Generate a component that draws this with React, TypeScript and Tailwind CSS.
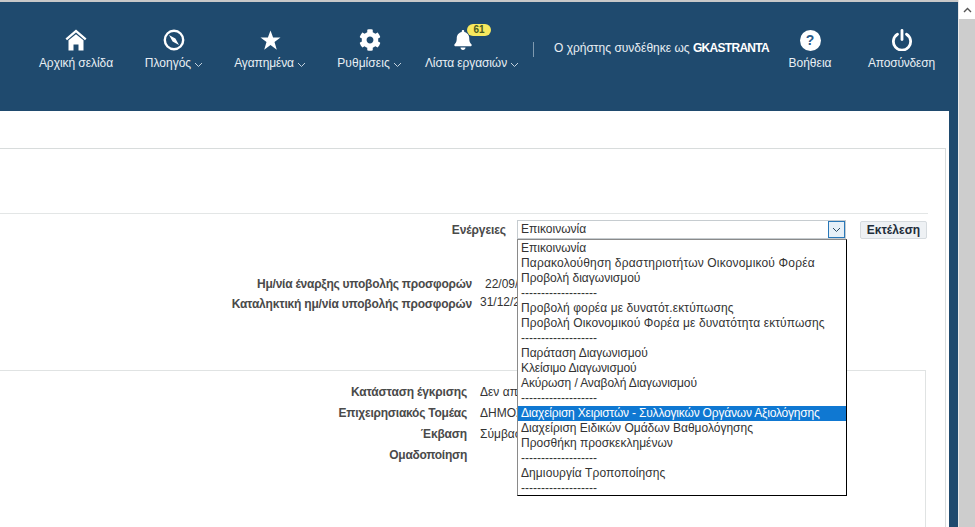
import React from "react";
import { FaBell, FaCog } from "react-icons/fa";

const navItems = [
  { label: "Αρχική σελίδα", icon: "home", ml: "ml-[39px]", w: "w-[74px]", tw: "tracking-[-0.05px]" },
  { label: "Πλοηγός", icon: "compass", ml: "ml-[32px]", w: "w-[58px]", tw: "", caret: true },
  { label: "Αγαπημένα", icon: "star", ml: "ml-[32px]", w: "w-[70px]", tw: "tracking-[-0.15px]", caret: true },
  { label: "Ρυθμίσεις", icon: "cog", ml: "ml-[32px]", w: "w-[65px]", tw: "tracking-[0.05px]", caret: true },
  { label: "Λίστα εργασιών", icon: "bell", ml: "ml-[24px]", w: "w-[92px]", tw: "tracking-[-0.1px]", caret: true },
];

// tracking per row: the source font was hinted, so line widths differ a little
const options = [
  { text: "Επικοινωνία", tw: "" },
  { text: "Παρακολούθηση δραστηριοτήτων Οικονομικού Φορέα", tw: "tracking-[0.17px]" },
  { text: "Προβολή διαγωνισμού", tw: "" },
  { text: "-------------------", tw: "" },
  { text: "Προβολή φορέα με δυνατότ.εκτύπωσης", tw: "tracking-[0.09px]" },
  { text: "Προβολή Οικονομικού Φορέα με δυνατότητα εκτύπωσης", tw: "tracking-[0.1px]" },
  { text: "-------------------", tw: "" },
  { text: "Παράταση Διαγωνισμού", tw: "" },
  { text: "Κλείσιμο Διαγωνισμού", tw: "tracking-[-0.1px]" },
  { text: "Ακύρωση / Αναβολή Διαγωνισμού", tw: "tracking-[-0.1px]" },
  { text: "-------------------", tw: "" },
  { text: "Διαχείριση Χειριστών - Συλλογικών Οργάνων Αξιολόγησης", tw: "tracking-[-0.19px]" },
  { text: "Διαχείριση Ειδικών Ομάδων Βαθμολόγησης", tw: "" },
  { text: "Προσθήκη προσκεκλημένων", tw: "" },
  { text: "-------------------", tw: "" },
  { text: "Δημιουργία Τροποποίησης", tw: "tracking-[0.09px]" },
  { text: "-------------------", tw: "" },
];

const Caret = () => (
  <svg width="9" height="6" viewBox="0 0 9 6" className="ml-[3px] mt-[4px] shrink-0">
    <path d="M1 1l3.5 3.5L8 1" fill="none" stroke="#c3d2de" strokeWidth="1" />
  </svg>
);

const NavIcon = ({ name }: { name: string }) => {
  if (name === "home") {
    return (
      <svg width="22" height="22" viewBox="0 0 22 22">
        <path d="M11 0.5L0.5 9.5 2 11.2 11 3.6l9 7.6 1.5-1.7z" fill="#fff" />
        <path d="M3.5 11.2L11 5.2l7.5 6V21.5h-5v-6h-5v6h-5z" fill="#fff" />
      </svg>
    );
  }
  if (name === "compass") {
    return (
      <svg width="22" height="22" viewBox="0 0 22 22">
        <circle cx="11" cy="11" r="9.2" fill="none" stroke="#fff" strokeWidth="2.4" />
        <path d="M6 6L12.4 9.6 16 16 9.6 12.4z" fill="#fff" />
      </svg>
    );
  }
  if (name === "star") {
    return (
      <svg width="21" height="21" viewBox="0 0 21 21">
        <path d="M10.5 0.5l2.6 7h7.4l-6 4.5 2.3 7.8-6.3-4.7-6.3 4.7 2.3-7.8-6-4.5h7.4z" fill="#fff" />
      </svg>
    );
  }
  if (name === "cog") return <FaCog size={22} color="#fff" />;
  return (
    <div className="relative mr-[18px]">
      <FaBell size={20} color="#fff" />
      <span className="absolute left-[14px] top-[-6px] h-[12px] w-[24px] rounded-full bg-[#f7e95e] text-center text-[10px] font-bold leading-[12px] text-[#4a5a20]">
        61
      </span>
    </div>
  );
};

const Field = ({ label, value, w, gap, tw, vClass }: { label: string; value: string; w: string; gap: string; tw: string; vClass?: string }) => (
  <div className="flex h-[21px] items-center">
    <span className={`${w} ${tw} whitespace-nowrap text-right font-bold text-[#4a4a4a]`}>{label}</span>
    <span className={`${gap} ${vClass ?? ""} whitespace-nowrap text-[#333]`}>{value}</span>
  </div>
);

const App = () => {
  return (
    <div className="flex h-[527px] w-[975px] overflow-hidden bg-white font-['Liberation_Sans',Arial,sans-serif] text-[12px]">
      <div className="min-w-0 flex-1">
        <div className="h-[2px] bg-[#c8c8c8]" />
        <nav className="flex h-[109px] bg-[#1f4a6e] text-[#e9eff4]">
          {navItems.map((item) => (
            <div key={item.label} className={`${item.ml} ${item.w} flex shrink-0 flex-col items-center pt-[27px]`}>
              <div className="flex h-[22px] items-center justify-center">
                <NavIcon name={item.icon} />
              </div>
              <div className={`${item.tw} mt-[5px] flex items-center whitespace-nowrap leading-[14px]`}>
                {item.label}
                {item.caret && <Caret />}
              </div>
            </div>
          ))}
          <div className="ml-[15px] mt-[40px] h-[15px] w-px bg-[#7f9ab0]" />
          <div className="ml-[20px] w-[215px] whitespace-nowrap pt-[39px] leading-[15px]">
            Ο χρήστης συνδέθηκε ως <b className="tracking-[-0.7px] text-white">GKASTRANTA</b>
          </div>
          <div className="ml-[19px] flex w-[44px] flex-col items-center pt-[27px]">
            <div className="flex h-[22px] w-[22px] items-center justify-center">
              <div className="flex h-[21px] w-[21px] items-center justify-center rounded-full bg-white text-[14px] font-bold leading-none text-[#2a5a8a]">
                ?
              </div>
            </div>
            <div className="mt-[5px] leading-[14px]">Βοήθεια</div>
          </div>
          <div className="ml-[36px] flex w-[67px] flex-col items-center pt-[27px]">
            <div className="flex h-[22px] items-center">
              <svg width="22" height="22" viewBox="0 0 22 22">
                <path d="M6.5 5.2a8.6 8.6 0 1 0 9 0" fill="none" stroke="#fff" strokeWidth="2.8" strokeLinecap="round" />
                <path d="M11 1.5v9" fill="none" stroke="#fff" strokeWidth="2.8" strokeLinecap="round" />
              </svg>
            </div>
            <div className="mt-[5px] whitespace-nowrap leading-[14px] tracking-[-0.2px]">Αποσύνδεση</div>
          </div>
        </nav>
        <div className="h-[416px] border-r-[9px] border-[#1f4a6e] bg-white pt-[37px]">
          <div className="mr-[3px] h-[379px] border-t border-r border-[#d8dcdc]">
            <div className="mr-[17px] mt-[64px] border-t border-[#e3e6e6]">
              <div className="h-[156px]">
                <div className="flex h-[30px] items-center pt-[1px]">
                  <span className="w-[506px] text-right font-bold tracking-[-0.1px] text-[#4a4a4a]">Ενέργειες</span>
                  <div className="relative ml-[11px] h-[19px] w-[329px] border border-[#c6ccd0] bg-white pl-[3px] leading-[17px] text-[#333]">
                    Επικοινωνία
                    <div className="absolute right-0 top-0 flex h-[17px] w-[17px] items-center justify-center border border-[#2a78b8] bg-[#e6f0f8]">
                      <svg width="9" height="6" viewBox="0 0 9 6">
                        <path d="M1 1l3.5 3.5L8 1" fill="none" stroke="#2d4a60" strokeWidth="1" />
                      </svg>
                    </div>
                    <div className="absolute left-[-1px] top-[18px] z-10 h-[257px] w-[330px] border border-black border-l-[#8a8a8a] border-t-[#8a8a8a] bg-white pt-px text-[#333]">
                      {options.map((o, i) => (
                        <div
                          key={i}
                          className={`${o.tw} h-[15px] whitespace-nowrap pl-[3px] leading-[15px] ${i === 11 ? "bg-[#0f78d2] text-white" : ""}`}
                        >
                          {o.text}
                        </div>
                      ))}
                    </div>
                  </div>
                  <button className="ml-[14px] h-[18px] w-[67px] rounded-[2px] border border-[#d6dbdf] bg-[#eef1f4] text-[12px] font-bold leading-[16px] text-[#1f2d3a]">
                    Εκτέλεση
                  </button>
                </div>
                <div className="mt-[29px]">
                  <Field label="Ημ/νία έναρξης υποβολής προσφορών" value="22/09/2016" w="w-[472px]" gap="ml-[13px]" tw="tracking-[-0.24px]" />
                  <div className="-mt-px">
                    <Field label="Καταληκτική ημ/νία υποβολής προσφορών" value="31/12/2016" w="w-[472px]" gap="ml-[8px]" tw="tracking-[-0.19px]" vClass="-mt-[3px]" />
                  </div>
                </div>
              </div>
              <div className="mr-[2px] h-[158px] border-t border-r border-[#e0e3e3] pt-[10px]">
                <Field label="Κατάσταση έγκρισης" value="Δεν απαιτείται" w="w-[467px]" gap="ml-[13px]" tw="tracking-[-0.17px]" />
                <Field label="Επιχειρησιακός Τομέας" value="ΔΗΜΟΣΙΟΣ" w="w-[467px]" gap="ml-[13px]" tw="tracking-[-0.24px]" />
                <Field label="Έκβαση" value="Σύμβαση" w="w-[467px]" gap="ml-[13px]" tw="tracking-[-0.17px]" />
                <Field label="Ομαδοποίηση" value="" w="w-[467px]" gap="ml-[13px]" tw="tracking-[-0.27px]" />
              </div>
            </div>
          </div>
        </div>
      </div>
      <div className="flex w-[17px] shrink-0 flex-col border-l border-[#e8e8e8] bg-[#f0f0f0]">
        <div className="flex h-[19px] items-center justify-center bg-white">
          <svg width="9" height="6" viewBox="0 0 9 6">
            <path d="M1 5l3.5-3.5L8 5" fill="none" stroke="#555" strokeWidth="1.4" />
          </svg>
        </div>
        <div className="flex-1 bg-[#cdcdcd]" />
      </div>
    </div>
  );
};

export default App;
